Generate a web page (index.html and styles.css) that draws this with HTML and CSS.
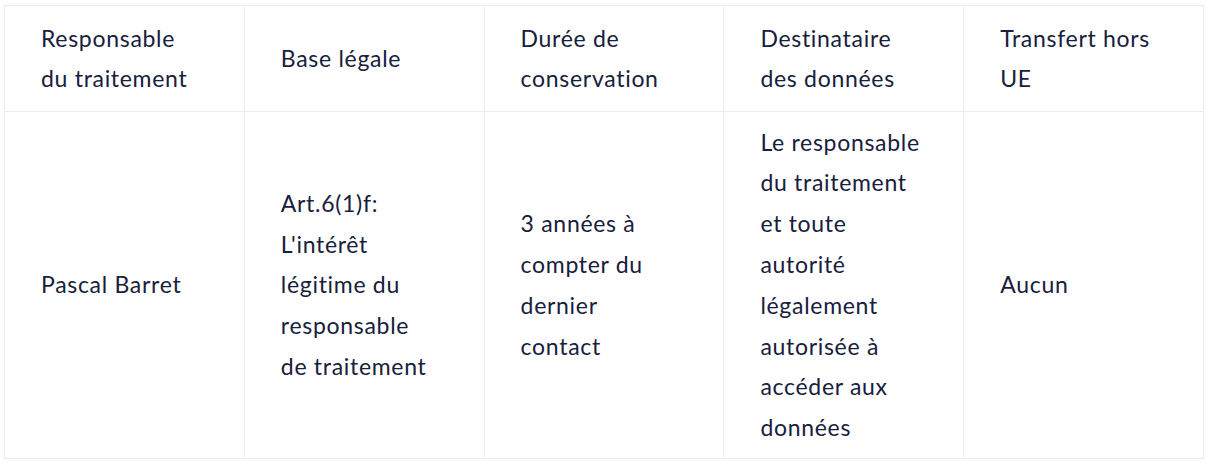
FILE: index.html
```html
<!DOCTYPE html>
<html lang="fr">
<head>
<meta charset="utf-8">
<link rel="stylesheet" href="styles.css">
</head>
<body>
<div class="wrap">
<table class="rgpd">
  <thead>
    <tr>
      <th>Responsable du traitement</th>
      <th>Base légale</th>
      <th>Durée de conservation</th>
      <th>Destinataire des données</th>
      <th>Transfert hors UE</th>
    </tr>
  </thead>
  <tbody>
    <tr>
      <td>Pascal Barret</td>
      <td>Art.6(1)f: L'intérêt légitime du responsable de traitement</td>
      <td>3 années à compter du dernier contact</td>
      <td>Le responsable du traitement et toute autorité légalement autorisée à accéder aux données</td>
      <td>Aucun</td>
    </tr>
  </tbody>
</table>
</div>
</body>
</html>
```

FILE: styles.css
```css
html, body {
  margin: 0;
  background: #ffffff;
}
.wrap {
  padding: 5px 4px;
}
.rgpd {
  width: 1200px;
  table-layout: fixed;
  border-collapse: collapse;
  font-family: Lato, "Noto Sans", sans-serif;
  font-size: 23px;
  letter-spacing: 0.7px;
  line-height: 40.8px;
  color: #17203c;
}
.rgpd th,
.rgpd td {
  border: 1px solid #ececec;
  padding: 11.5px 43px 11.5px 36px;
  text-align: left;
  vertical-align: middle;
  font-weight: 400;
}
.rgpd td {
  padding-top: 10px;
  padding-bottom: 10px;
}
```
